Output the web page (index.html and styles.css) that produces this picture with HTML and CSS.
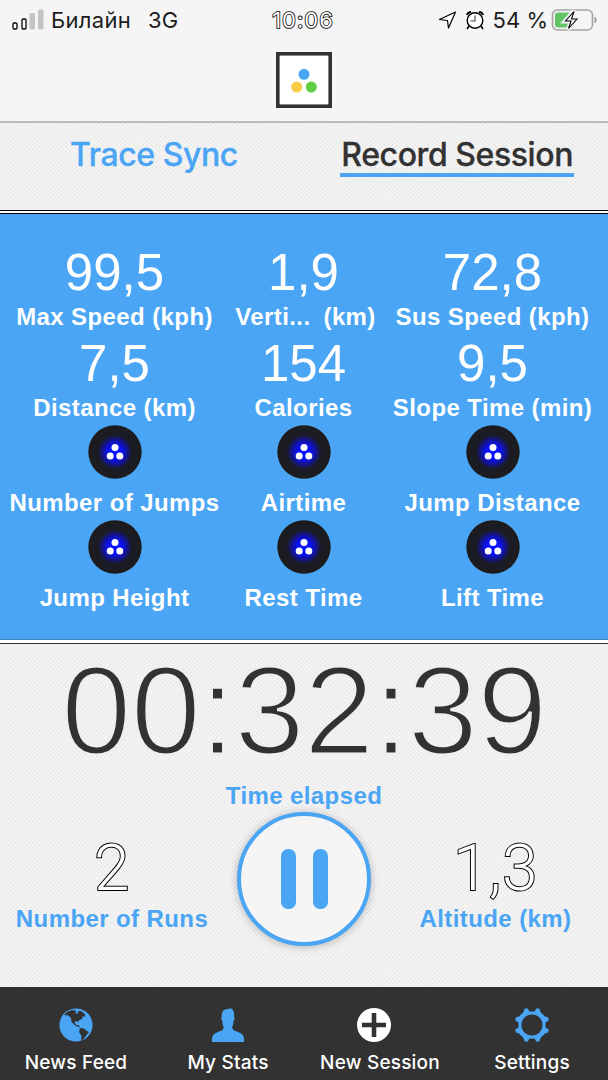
FILE: index.html
```html
<!DOCTYPE html>
<html lang="en">

<head>
    <meta charset="UTF-8" />
    <meta name="viewport" content="width=device-width, initial-scale=1.0" />
    <title>Record Session</title>
    <link rel="stylesheet" href="styles.css">
</head>

<body>
    <!-- shared icons -->
    <svg class="defs" width="0" height="0">
        <defs>
            <radialGradient id="glow">
                <stop offset="0" stop-color="#0a12ff" />
                <stop offset="0.26" stop-color="#0a12f4" />
                <stop offset="0.44" stop-color="#12149c" />
                <stop offset="0.64" stop-color="#1b1b26" />
                <stop offset="1" stop-color="#1c1c1e" />
            </radialGradient>
            <symbol id="sensor" viewBox="0 0 54 54">
                <circle cx="27" cy="27" r="26.7" fill="url(#glow)" />
                <circle cx="27" cy="22.6" r="3.5" fill="#fff" />
                <circle cx="22.2" cy="31" r="3.5" fill="#fff" />
                <circle cx="31.8" cy="31" r="3.5" fill="#fff" />
            </symbol>
        </defs>
    </svg>

    <header class="header">
        <div class="status">
            <div class="status-left">
                <svg class="signal" width="33" height="22" viewBox="0 0 33 22">
                    <rect x="1" y="14" width="4" height="6" rx="1.2" fill="#fff" stroke="#000" stroke-width="1.3" />
                    <rect x="10" y="10" width="4" height="10" rx="1.2" fill="#fff" stroke="#000" stroke-width="1.3" />
                    <rect x="17.5" y="4" width="5.5" height="16.5" rx="1.5" fill="#c4c4c4" />
                    <rect x="26" y="0.5" width="5.5" height="20" rx="1.5" fill="#c4c4c4" />
                </svg>
                <span class="carrier">Билайн</span>
                <span class="network">3G</span>
            </div>
            <div class="clock">10:06</div>
            <div class="status-right">
                <svg class="location" width="19" height="20" viewBox="0 0 19 20">
                    <path d="M1.5 9.5 L17.5 2 L10.5 18 L9.5 10.5 Z" fill="#fff" stroke="#000" stroke-width="1.2" stroke-linejoin="round" />
                </svg>
                <svg class="alarm" width="20" height="20" viewBox="0 0 20 20">
                    <path d="M2 5 Q3 2 6 2 M18 5 Q17 2 14 2" fill="none" stroke="#000" stroke-width="2" />
                    <path d="M4 16 L2 19 M16 16 L18 19" stroke="#000" stroke-width="1.5" />
                    <circle cx="10" cy="10.5" r="7.8" fill="#fff" stroke="#000" stroke-width="1.4" />
                    <path d="M10 5.5 V11 H5.5" fill="none" stroke="#444" stroke-width="1.1" />
                </svg>
                <span class="percent">54 %</span>
                <svg class="battery" width="47" height="24" viewBox="0 0 47 24">
                    <rect x="1.5" y="2" width="40" height="20" rx="5" fill="none" stroke="#a3a3a3" stroke-width="1.6" />
                    <path d="M44 9 Q46.5 12 44 15 Z" fill="#a3a3a3" stroke="#a3a3a3" />
                    <rect x="4" y="4.5" width="18" height="15" rx="3" fill="#62c466" />
                    <path d="M23 2.5 L13.5 13.5 H19.5 L17 21.5 L27 10.5 H21 Z" fill="#fff" stroke="#f5f5f5" stroke-width="4" />
                    <path d="M23 3.5 L14.5 13 H20 L17.5 20.5 L26 11 H20.5 Z" fill="#fff" stroke="#000" stroke-width="1.1" />
                </svg>
            </div>
        </div>
        <svg class="logo" width="56" height="56" viewBox="0 0 56 56">
            <rect x="1.8" y="1.8" width="52.4" height="52.4" fill="#fff" stroke="#323232" stroke-width="3.6" />
            <circle cx="28" cy="22.3" r="5.5" fill="#4aa5f4" />
            <circle cx="20.7" cy="35" r="5.5" fill="#f7cd46" />
            <circle cx="35.3" cy="35" r="5.5" fill="#62ce42" />
        </svg>
    </header>

    <nav class="tabs">
        <a class="tab">Trace Sync</a>
        <a class="tab active">Record Session</a>
    </nav>

    <section class="stats">
        <div class="stat">
            <div class="value">99,5</div>
            <div class="label">Max Speed (kph)</div>
        </div>
        <div class="stat">
            <div class="value">1,9</div>
            <div class="label vertical"><span>Verti...</span><span>(km)</span></div>
        </div>
        <div class="stat">
            <div class="value">72,8</div>
            <div class="label">Sus Speed (kph)</div>
        </div>
        <div class="stat">
            <div class="value">7,5</div>
            <div class="label">Distance (km)</div>
        </div>
        <div class="stat">
            <div class="value">154</div>
            <div class="label">Calories</div>
        </div>
        <div class="stat">
            <div class="value">9,5</div>
            <div class="label">Slope Time (min)</div>
        </div>
        <div class="stat">
            <svg class="sensor"><use href="#sensor" /></svg>
            <div class="label">Number of Jumps</div>
        </div>
        <div class="stat">
            <svg class="sensor"><use href="#sensor" /></svg>
            <div class="label">Airtime</div>
        </div>
        <div class="stat">
            <svg class="sensor"><use href="#sensor" /></svg>
            <div class="label">Jump Distance</div>
        </div>
        <div class="stat">
            <svg class="sensor"><use href="#sensor" /></svg>
            <div class="label">Jump Height</div>
        </div>
        <div class="stat">
            <svg class="sensor"><use href="#sensor" /></svg>
            <div class="label">Rest Time</div>
        </div>
        <div class="stat">
            <svg class="sensor"><use href="#sensor" /></svg>
            <div class="label">Lift Time</div>
        </div>
    </section>

    <main class="session">
        <div class="timer">00:32:39</div>
        <div class="label">Time elapsed</div>
        <div class="controls">
            <div class="side">
                <div class="count">2</div>
                <div class="label">Number of Runs</div>
            </div>
            <button class="pause" aria-label="Pause"><span></span><span></span></button>
            <div class="side">
                <div class="count">1,3</div>
                <div class="label">Altitude (km)</div>
            </div>
        </div>
    </main>

    <footer class="menu">
        <a class="menu-item">
            <svg width="34" height="34" viewBox="0 0 34 34">
                <circle cx="17" cy="17" r="16.6" fill="#4aa5f4" />
                <path d="M5 7 L8 4 L13 2 L16 2.5 L17.5 4 L16 5 L18.5 6 L19.5 3 L22 3 L26 6 L26 9 L23.5 8 L23.500 10.500 L20.500 12 L19 14 L16.500 13 L15.500 15 L17.500 17 L20 17.500 L21 19.500 L18 18.500 L15 16.500 L12.500 14 L12 10 L9.500 7.500 Z" fill="#323232" />
                <path d="M21 20 L25 20.500 L27 22.500 L30 24 L27.500 27 L25.500 30 L22 33 L22.500 28 L20 24 Z" fill="#323232" />
            </svg>
            <span>News Feed</span>
        </a>
        <a class="menu-item">
            <svg width="34" height="34" viewBox="0 0 34 34">
                <path d="M1 34 V31 C1 27.500 3 25.500 7 24 C10.500 22.700 12.500 22 12.700 19 C11.600 17 11.400 15 11.300 13 C10 11.500 9.800 9.500 10.800 9 C10.300 4.500 12 1.200 16 1.200 L19.500 0.300 C22.800 1.500 23.700 5 23 9 C24 9.500 23.800 11.500 22.500 13 C22.400 15 22.200 17 21.100 19 C21.300 22 23.500 22.700 27 24 C31 25.500 33 27.500 33 31 V34 Z" fill="#4aa5f4" />
            </svg>
            <span>My Stats</span>
        </a>
        <a class="menu-item new">
            <svg width="34" height="34" viewBox="0 0 34 34">
                <circle cx="17" cy="17" r="17" fill="#fff" />
                <path d="M17 5 V29 M5 17 H29" stroke="#323232" stroke-width="4.6" />
            </svg>
            <span>New Session</span>
        </a>
        <a class="menu-item">
            <svg width="34" height="34" viewBox="0 0 34 34">
                <path d="M8.500 4 L9.500 0.800 L12.500 0.300 L14.500 3.500 H19.500 L21.500 0.300 L24.500 0.800 L25.500 4 L30 8.500 L33.200 9.500 L33.700 12.500 L30.500 14.500 V19.500 L33.700 21.500 L33.200 24.500 L30 25.500 L25.500 30 L24.500 33.200 L21.500 33.700 L19.500 30.500 H14.500 L12.500 33.700 L9.500 33.200 L8.500 30 L4 25.500 L0.800 24.500 L0.300 21.500 L3.500 19.500 V14.500 L0.300 12.500 L0.800 9.500 L4 8.500 Z" fill="#4aa5f4" />
                <circle cx="17" cy="17" r="10.6" fill="#323232" />
            </svg>
            <span>Settings</span>
        </a>
    </footer>
</body>

</html>
```
FILE: styles.css
```css
* {
    margin: 0;
    padding: 0;
    box-sizing: border-box;
}

body {
    height: 1080px;
    overflow: hidden;
    display: flex;
    flex-direction: column;
    background-color: #e8e8e8;
    background-image:
        radial-gradient(circle, #f8f8f8 20%, transparent 60%),
        radial-gradient(circle, #f8f8f8 20%, transparent 60%);
    background-size: 4.4px 4.4px;
    background-position: 0 0, 2.2px 2.2px;
    font-family: "Liberation Sans", Arial, sans-serif;
}

svg {
    display: block;
    flex: none;
}

.defs {
    height: 0;
}

.header {
    height: 123px;
    flex: none;
    background: #f5f5f5;
    border-bottom: 2px solid #b9b9b9;
    display: flex;
    flex-direction: column;
    align-items: center;
}

.status {
    width: 100%;
    height: 40px;
    margin-bottom: 12px;
    padding: 0 10px 0 12px;
    display: grid;
    grid-template-columns: 1fr auto 1fr;
    align-items: center;
    font-family: Inter, sans-serif;
    font-size: 22px;
    color: #1c1c1c;
}

.status-left,
.status-right {
    display: flex;
    align-items: center;
}

.status-right {
    justify-content: flex-end;
}

.carrier {
    margin: 0 17px 0 6px;
    letter-spacing: 0.3px;
}

.clock {
    margin-right: 4px;
    color: #fff;
    letter-spacing: 1px;
    -webkit-text-stroke: 1.6px #000;
    paint-order: stroke fill;
}

.alarm {
    margin: 0 8px 0 8px;
}

.percent {
    margin-right: 3px;
}

.tabs {
    height: 87px;
    flex: none;
    display: flex;
    justify-content: space-between;
    align-items: flex-start;
    padding: 13px 34px 0 70px;
    font-family: Inter, sans-serif;
    font-size: 32px;
    font-weight: 500;
    line-height: 37px;
    letter-spacing: -0.42px;
    -webkit-text-stroke: 0.3px;
}

.tab {
    color: #4aa5f4;
}

.tab.active {
    padding: 0 1px;
    color: #323232;
    border-bottom: 4px solid #4aa5f4;
}

.stats {
    height: 434px;
    flex: none;
    padding: 32px 20px 0;
    background: #4aa5f4;
    border-top: 1px solid #000;
    border-bottom: 1px solid #333;
    box-shadow: inset 0 2px #fff, inset 0 3px #000, inset 0 -3px #fff, inset 0 -4px #3b84c4;
    display: grid;
    grid-template-columns: repeat(3, 189px);
    grid-template-rows: 91px 91px 95px 95px;
    color: #fff;
}

.stat {
    display: flex;
    flex-direction: column;
    align-items: center;
}

.value {
    height: 58px;
    line-height: 60px;
    font-size: 51px;
}

.label {
    line-height: 32px;
    font-size: 24px;
    font-weight: bold;
    letter-spacing: 0.4px;
    white-space: nowrap;
}

.vertical {
    margin-left: 4px;
    display: flex;
    gap: 13px;
}

.sensor {
    width: 54px;
    height: 54px;
    margin-bottom: 8px;
}

.session {
    height: 343px;
    flex: none;
    padding-top: 6px;
    display: flex;
    flex-direction: column;
    align-items: center;
    color: #4aa5f4;
}

/* the stroke takes the background colour to thin the digits */
.timer {
    height: 130px;
    line-height: 122px;
    font-size: 126px;
    letter-spacing: -0.6px;
    color: #323232;
    -webkit-text-stroke: 3px #efefef;
}

.controls {
    width: 100%;
    padding: 0 16px;
    display: grid;
    grid-template-columns: 192px 192px 191px;
    justify-items: center;
}

.side {
    padding-top: 24px;
    display: flex;
    flex-direction: column;
    align-items: center;
}

.count {
    height: 67px;
    line-height: 66px;
    font-family: Roboto, "Liberation Sans", sans-serif;
    font-weight: 300;
    font-size: 64px;
    letter-spacing: 0.6px;
    color: #fff;
    -webkit-text-stroke: 2px #000;
    paint-order: stroke fill;
}

.pause {
    width: 134px;
    height: 134px;
    border: 4px solid #4aa5f4;
    border-radius: 50%;
    background: #f5f5f5;
    box-shadow: 0 1px 8px rgba(0, 0, 0, 0.25);
    display: flex;
    justify-content: center;
    align-items: center;
    gap: 17px;
}

.pause span {
    width: 15px;
    height: 60px;
    border-radius: 7px;
    background: #4aa5f4;
}

.menu {
    height: 93px;
    flex: none;
    padding-top: 21px;
    background: #323232;
    display: grid;
    grid-template-columns: repeat(4, 152px);
    color: #fff;
    font-family: Inter, sans-serif;
    font-size: 19px;
    font-weight: 500;
    letter-spacing: 0.2px;
}

.menu-item {
    display: flex;
    flex-direction: column;
    align-items: center;
    gap: 9px;
}

.new svg {
    margin-right: 12px;
}
```
